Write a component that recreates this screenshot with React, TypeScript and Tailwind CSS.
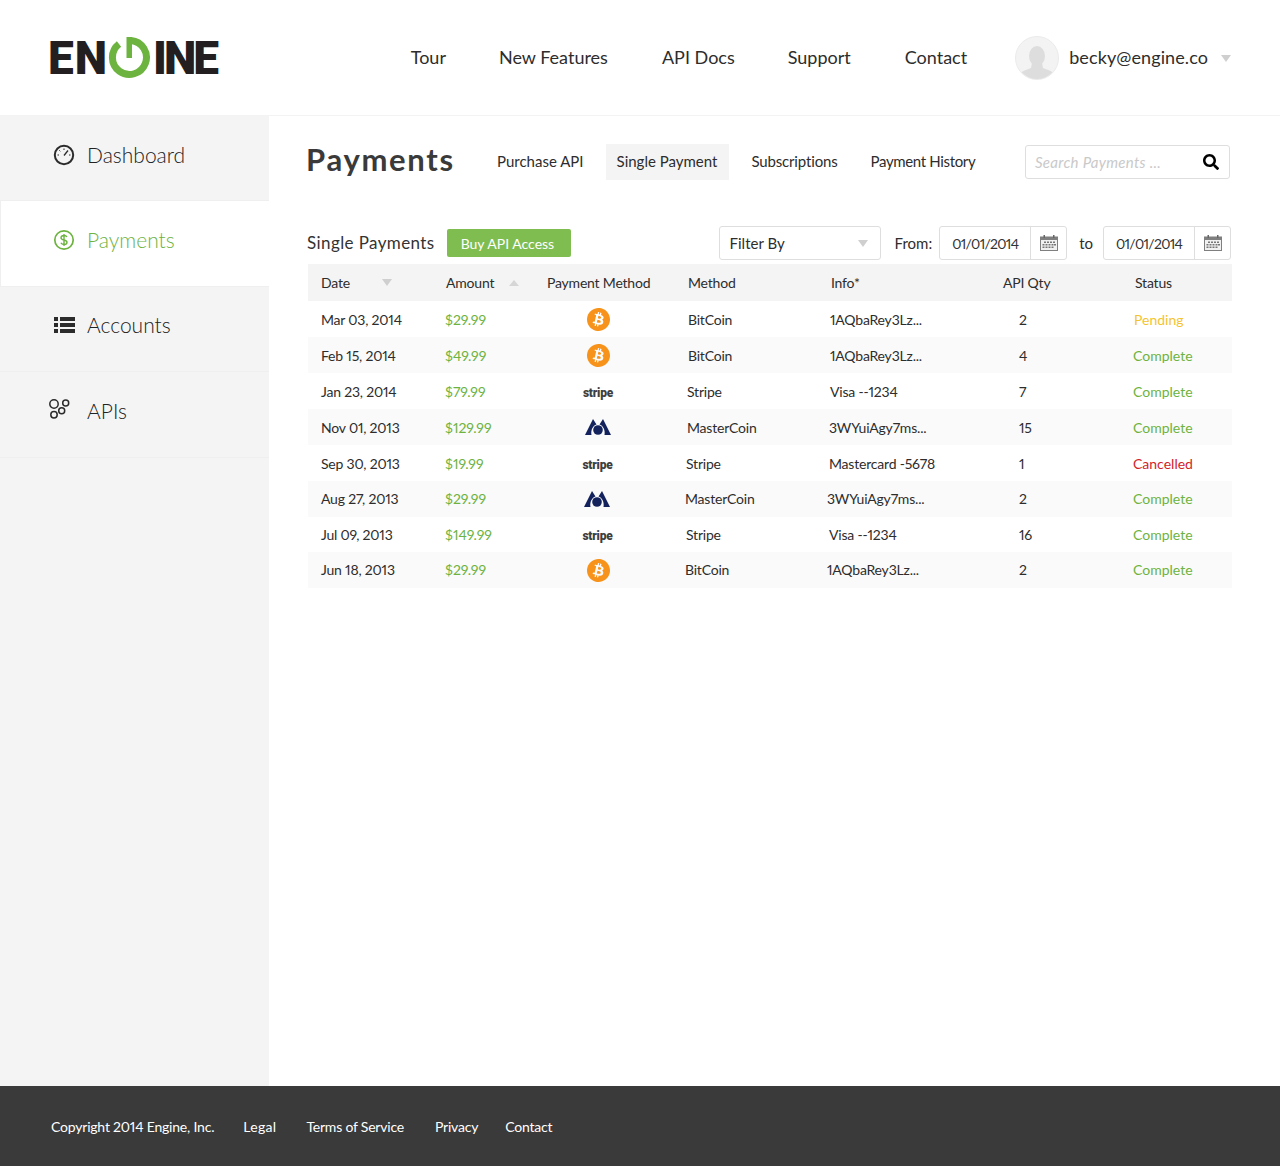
import React from 'react';
import { FaSearch } from 'react-icons/fa';
import { SiBitcoin } from 'react-icons/si';

const navLinks = [
  { label: 'Tour', gap: 'mr-[53px]' },
  { label: 'New Features', gap: 'mr-[54px]' },
  { label: 'API Docs', gap: 'mr-[53px]' },
  { label: 'Support', gap: 'mr-[54px]' },
  { label: 'Contact', gap: 'mr-[48px]' },
];

type Method = 'bitcoin' | 'stripe' | 'mastercoin';

const rows: {
  date: string; amount: string; logo: Method; logoClass?: string; method: string; info: string; qty: string; status: string;
  statusColor: string; cols: string; bg: string; h: string;
}[] = [
  { date: 'Mar 03, 2014', amount: '$29.99', logo: 'bitcoin', method: 'BitCoin', info: '1AQbaRey3Lz...', qty: '2', status: 'Pending', statusColor: 'text-[#f4c430]', cols: 'grid-cols-[124px_85px_158px_142px_189px_115px_1fr]', bg: 'bg-white', h: 'h-[36px]' },
  { date: 'Feb 15, 2014', amount: '$49.99', logo: 'bitcoin', method: 'BitCoin', info: '1AQbaRey3Lz...', qty: '4', status: 'Complete', statusColor: 'text-[#6db33f]', cols: 'grid-cols-[124px_85px_158px_142px_189px_114px_1fr]', bg: 'bg-[#fafafa]', h: 'h-[36px]' },
  { date: 'Jan 23, 2014', amount: '$79.99', logo: 'stripe', logoClass: 'mt-[1px]', method: 'Stripe', info: 'Visa --1234', qty: '7', status: 'Complete', statusColor: 'text-[#6db33f]', cols: 'grid-cols-[124px_85px_157px_143px_189px_114px_1fr]', bg: 'bg-white', h: 'h-[36px]' },
  { date: 'Nov 01, 2013', amount: '$129.99', logo: 'mastercoin', method: 'MasterCoin', info: '3WYuiAgy7ms...', qty: '15', status: 'Complete', statusColor: 'text-[#6db33f]', cols: 'grid-cols-[124px_85px_157px_142px_190px_114px_1fr]', bg: 'bg-[#fafafa]', h: 'h-[36px]' },
  { date: 'Sep 30, 2013', amount: '$19.99', logo: 'stripe', logoClass: 'mt-[1px]', method: 'Stripe', info: 'Mastercard -5678', qty: '1', status: 'Cancelled', statusColor: 'text-[#d2232a]', cols: 'grid-cols-[124px_85px_156px_143px_190px_114px_1fr]', bg: 'bg-white', h: 'h-[36px]' },
  { date: 'Aug 27, 2013', amount: '$29.99', logo: 'mastercoin', logoClass: 'mt-[2px]', method: 'MasterCoin', info: '3WYuiAgy7ms...', qty: '2', status: 'Complete', statusColor: 'text-[#6db33f]', cols: 'grid-cols-[124px_85px_155px_142px_192px_114px_1fr]', bg: 'bg-[#fafafa]', h: 'h-[36px] pb-[2px]' },
  { date: 'Jul 09, 2013', amount: '$149.99', logo: 'stripe', logoClass: '-mt-[1px]', method: 'Stripe', info: 'Visa --1234', qty: '16', status: 'Complete', statusColor: 'text-[#6db33f]', cols: 'grid-cols-[124px_85px_156px_143px_190px_114px_1fr]', bg: 'bg-white', h: 'h-[35px]' },
  { date: 'Jun 18, 2013', amount: '$29.99', logo: 'bitcoin', logoClass: 'ml-[2px] mt-[2px]', method: 'BitCoin', info: '1AQbaRey3Lz...', qty: '2', status: 'Complete', statusColor: 'text-[#6db33f]', cols: 'grid-cols-[124px_85px_155px_142px_192px_114px_1fr]', bg: 'bg-[#fafafa]', h: 'h-[36px] pb-[2px]' },
];

const Logo = () => (
  <div className="flex items-center h-[44px] w-[172px] -ml-[2px] text-[#231f20] font-['Roboto',sans-serif] font-black text-[46px] leading-none">
    <span className="w-[60px] tracking-[1px]">EN</span>
    <svg width="44" height="44" viewBox="0 0 44 44" className="shrink-0">
      <path d="M23 4.5 A17 17 0 1 1 11 8" fill="none" stroke="#6cb33f" strokeWidth="7" />
      <rect x="18.5" y="1" width="5.5" height="21" fill="#6cb33f" />
    </svg>
    <span className="ml-[1px] tracking-[-3px]">INE</span>
  </div>
);

const GaugeIcon = () => (
  <svg width="22" height="22" viewBox="0 0 22 22" fill="none" stroke="#2b2b2b">
    <circle cx="11" cy="11" r="9.2" strokeWidth="2" />
    <path d="M11 11.5 L15 6.5" strokeWidth="1.3" />
    <path d="M11 4.5v1.5M4.5 11H6M16 11h1.5M6.3 6.3l1 1" strokeWidth="1" />
  </svg>
);

const DollarIcon = () => (
  <svg width="22" height="22" viewBox="0 0 22 22" fill="none" stroke="#6db33f">
    <circle cx="11" cy="11" r="9.2" strokeWidth="1.7" />
    <path d="M14 8c-.5-1-1.6-1.5-3-1.5-1.7 0-3 .8-3 2.2 0 3 6 1.6 6 4.6 0 1.4-1.3 2.2-3 2.2-1.5 0-2.6-.6-3.1-1.7M11 5v12" strokeWidth="1.4" />
  </svg>
);

const ListIcon = () => (
  <svg width="21" height="16" viewBox="0 0 21 16" fill="#2b2b2b">
    <rect x="0" y="0" width="4" height="4" />
    <rect x="6" y="0" width="15" height="4" />
    <rect x="0" y="6" width="4" height="4" />
    <rect x="6" y="6" width="15" height="4" />
    <rect x="0" y="12" width="4" height="4" />
    <rect x="6" y="12" width="15" height="4" />
  </svg>
);

const ApiIcon = () => (
  <svg width="21" height="21" viewBox="0 0 21 21" fill="none" stroke="#2b2b2b" strokeWidth="1.5">
    <circle cx="5" cy="6" r="4.2" />
    <circle cx="16.7" cy="5" r="3" />
    <circle cx="12.7" cy="12.7" r="3" />
    <circle cx="5" cy="16.7" r="3.2" />
  </svg>
);

const CalendarIcon = () => (
  <svg width="18" height="16" viewBox="0 0 18 16">
    <rect x="0" y="1.5" width="18" height="14.5" fill="#7f7f7f" />
    <rect x="3.5" y="0" width="1.5" height="3" fill="#666" />
    <rect x="13" y="0" width="1.5" height="3" fill="#666" />
    <rect x="1" y="5" width="16" height="10" fill="#f1f1f1" />
    <g fill="#777">
      <rect x="4" y="6.5" width="2" height="1.5" /><rect x="7" y="6.5" width="2" height="1.5" /><rect x="10" y="6.5" width="2" height="1.5" /><rect x="13" y="6.5" width="2" height="1.5" />
      <rect x="2.5" y="9" width="2" height="1.5" /><rect x="5.5" y="9" width="2" height="1.5" /><rect x="8.5" y="9" width="2" height="1.5" /><rect x="11.5" y="9" width="2" height="1.5" /><rect x="14" y="9" width="2" height="1.5" />
      <rect x="2.5" y="11.5" width="2" height="1.5" /><rect x="5.5" y="11.5" width="2" height="1.5" /><rect x="8.5" y="11.5" width="2" height="1.5" /><rect x="11.5" y="11.5" width="2" height="1.5" />
    </g>
  </svg>
);

const MasterCoinLogo = () => (
  <svg width="26" height="18" viewBox="0 0 26 18" fill="#13225c">
    <path d="M0 17 L8 1 L11.5 6.5 C8 7.5 5.5 12 6.5 17 Z" />
    <path d="M26 17 L18 1 L14.5 6.5 C18 7.5 20.5 12 19.5 17 Z" />
    <circle cx="13" cy="12" r="4.8" />
  </svg>
);

const MethodLogo = ({ type }: { type: Method }) => {
  if (type === 'bitcoin') return <SiBitcoin size={23} className="text-[#f7931a]" />;
  if (type === 'mastercoin') return <MasterCoinLogo />;
  return <span className="font-['Roboto',sans-serif] font-black text-[12px] leading-none text-[#3f3f3f]">stripe</span>;
};

const Arrow = ({ up, color }: { up?: boolean; color: string }) => (
  <span
    className={`inline-block w-0 h-0 border-x-[5px] border-x-transparent ${up ? 'border-b-[6px]' : 'border-t-[7px]'} ${color}`}
  />
);

const DateField = () => (
  <div className="flex h-[34px] w-[128px] border border-[#dedede] rounded-[3px] bg-white">
    <span className="flex-1 flex items-center pl-[12px] text-[14px] tracking-[-0.7px] text-[#333]">01/01/2014</span>
    <span className="w-[36px] border-l border-[#dedede] flex items-center justify-center">
      <CalendarIcon />
    </span>
  </div>
);

export default function App() {
  return (
    <div className="min-h-screen flex flex-col bg-white font-['Lato',sans-serif] proportional-nums text-[#2d2d2d]">
      {/* Top bar */}
      <header className="h-[116px] shrink-0 border-b border-[#f3f3f3] flex items-center pl-[50px] pr-[49px]">
        <Logo />
        <nav className="ml-auto flex items-center text-[18px] text-[#2d2d2d]">
          {navLinks.map((l) => (
            <a key={l.label} className={l.gap}>{l.label}</a>
          ))}
          <span className="w-[44px] h-[44px] rounded-full bg-[#f3f3f3] border border-[#ebebeb] overflow-hidden mr-[10px] flex items-end justify-center">
            <svg width="36" height="34" viewBox="0 0 36 34" fill="#dddddd">
              <ellipse cx="18" cy="11" rx="8" ry="10" />
              <path d="M13 18 L23 18 L24 23 C29 25 34 26 35 30 L35 34 L1 34 L1 30 C2 26 7 25 12 23 Z" />
            </svg>
          </span>
          <span className="tracking-[0.1px]">becky@engine.co</span>
          <span className="ml-[13px] mt-[2px] flex"><Arrow color="border-t-[#cfcfcf]" /></span>
        </nav>
      </header>

      <div className="flex flex-1">
        {/* Sidebar */}
        <aside className="w-[269px] shrink-0 bg-[#f4f4f4]">
          <SideItem icon={<GaugeIcon />} label="Dashboard" h="h-[85px] pb-[7px]" />
          <SideItem icon={<DollarIcon />} label="Payments" h="h-[86px] pb-[7px]" active />
          <SideItem icon={<ListIcon />} label="Accounts" h="h-[85px] pb-[9px]" />
          <SideItem icon={<ApiIcon />} label="APIs" h="h-[86px] pb-[7px]" iconClass="-ml-[5px] mr-[17px] -mt-[6px]" />
        </aside>

        {/* Main */}
        <main className="flex-1 pl-[38px] pr-[48px] pt-[28px]">
          <div className="flex items-center h-[36px]">
            <h1 className="w-[190px] -ml-[1px] mr-[1px] pb-[6px] text-[31px] font-bold text-[#3a3a3a] tracking-[1.7px] leading-none">Payments</h1>
            <div className="flex items-center text-[15px] text-[#2d2d2d] -mt-[1px]">
              <span className="mr-[22px]">Purchase API</span>
              <span className="pl-[11px] pr-[12px] h-[36px] flex items-center bg-[#f4f4f4] mt-[1px] pb-[2px] mr-[22px]">Single Payment</span>
              <span className="mr-[33px] tracking-[-0.15px]">Subscriptions</span>
              <span className="tracking-[-0.35px]">Payment History</span>
            </div>
            <div className="ml-auto mr-[2px] w-[205px] h-[34px] border border-[#dedede] rounded-[3px] flex items-center pl-[9px] pr-[10px] justify-between">
              <span className="italic text-[15px] tracking-[0.3px] text-[#c9c9c9]">Search Payments ...</span>
              <FaSearch size={16} className="text-black" />
            </div>
          </div>

          <div className="flex items-center h-[34px] mt-[46px]">
            <span className="text-[17px] tracking-[0.4px] text-[#333]">Single Payments</span>
            <span className="ml-[12px] h-[28px] w-[124px] rounded-[2px] bg-[#7fbd51] text-white text-[14px] flex items-center pl-[14px]">Buy API Access</span>
            <div className="ml-auto mr-[1px] flex items-center">
              <div className="w-[162px] h-[34px] border border-[#dedede] rounded-[3px] flex items-center justify-between pl-[10px] pr-[12px] text-[15px] mr-[14px]">
                <span>Filter By</span>
                <Arrow color="border-t-[#cfcfcf]" />
              </div>
              <span className="text-[15px] mr-[7px]">From:</span>
              <DateField />
              <span className="text-[15px] ml-[12px] mr-[10px]">to</span>
              <DateField />
            </div>
          </div>

          {/* Table */}
          <div className="mt-[4px] ml-[1px] text-[14px] tracking-[-0.2px]">
            <div className="h-[37px] bg-[#f4f4f4] grid grid-cols-[125px_101px_141px_143px_172px_132px_1fr] items-center pl-[13px]">
              <span className="flex items-center justify-between pr-[54px]">Date<Arrow color="border-t-[#cfcfcf]" /></span>
              <span className="flex items-center justify-between pr-[28px]">Amount<Arrow up color="border-b-[#d6d6d6]" /></span>
              <span>Payment Method</span>
              <span>Method</span>
              <span>Info*</span>
              <span>API Qty</span>
              <span>Status</span>
            </div>
            {rows.map((r) => (
              <div key={r.date} className={`grid ${r.cols} ${r.bg} ${r.h} items-center pl-[13px]`}>
                <span>{r.date}</span>
                <span className="text-[#6db33f] tracking-normal">{r.amount}</span>
                <span className="flex justify-center pr-[21px]">
                  <span className={r.logoClass}><MethodLogo type={r.logo} /></span>
                </span>
                <span>{r.method}</span>
                <span>{r.info}</span>
                <span>{r.qty}</span>
                <span className={`${r.statusColor} tracking-normal`}>{r.status}</span>
              </div>
            ))}
          </div>
        </main>
      </div>

      {/* Footer */}
      <footer className="h-[80px] shrink-0 bg-[#3a3a3a] flex items-center pl-[51px] text-[14px] tracking-[-0.2px] text-white">
        <span className="mr-[29px]">Copyright 2014 Engine, Inc.</span>
        <span className="mr-[30px] tracking-[0.3px]">Legal</span>
        <span className="mr-[31px]">Terms of Service</span>
        <span className="mr-[27px]">Privacy</span>
        <span>Contact</span>
      </footer>
    </div>
  );
}

function SideItem({ icon, label, active, h, iconClass }: { icon: React.ReactNode; label: string; active?: boolean; h: string; iconClass?: string }) {
  return (
    <div
      className={`${h} flex items-center border-b border-[#efefef] ${
        active ? 'bg-white border-l border-l-[#efefef] text-[#6db33f] pl-[52px]' : 'text-[#222] pl-[53px]'
      }`}
    >
      <span className={`w-[22px] flex justify-center ${iconClass ?? 'mr-[12px]'}`}>{icon}</span>
      <span className="text-[21px] font-light">{label}</span>
    </div>
  );
}
